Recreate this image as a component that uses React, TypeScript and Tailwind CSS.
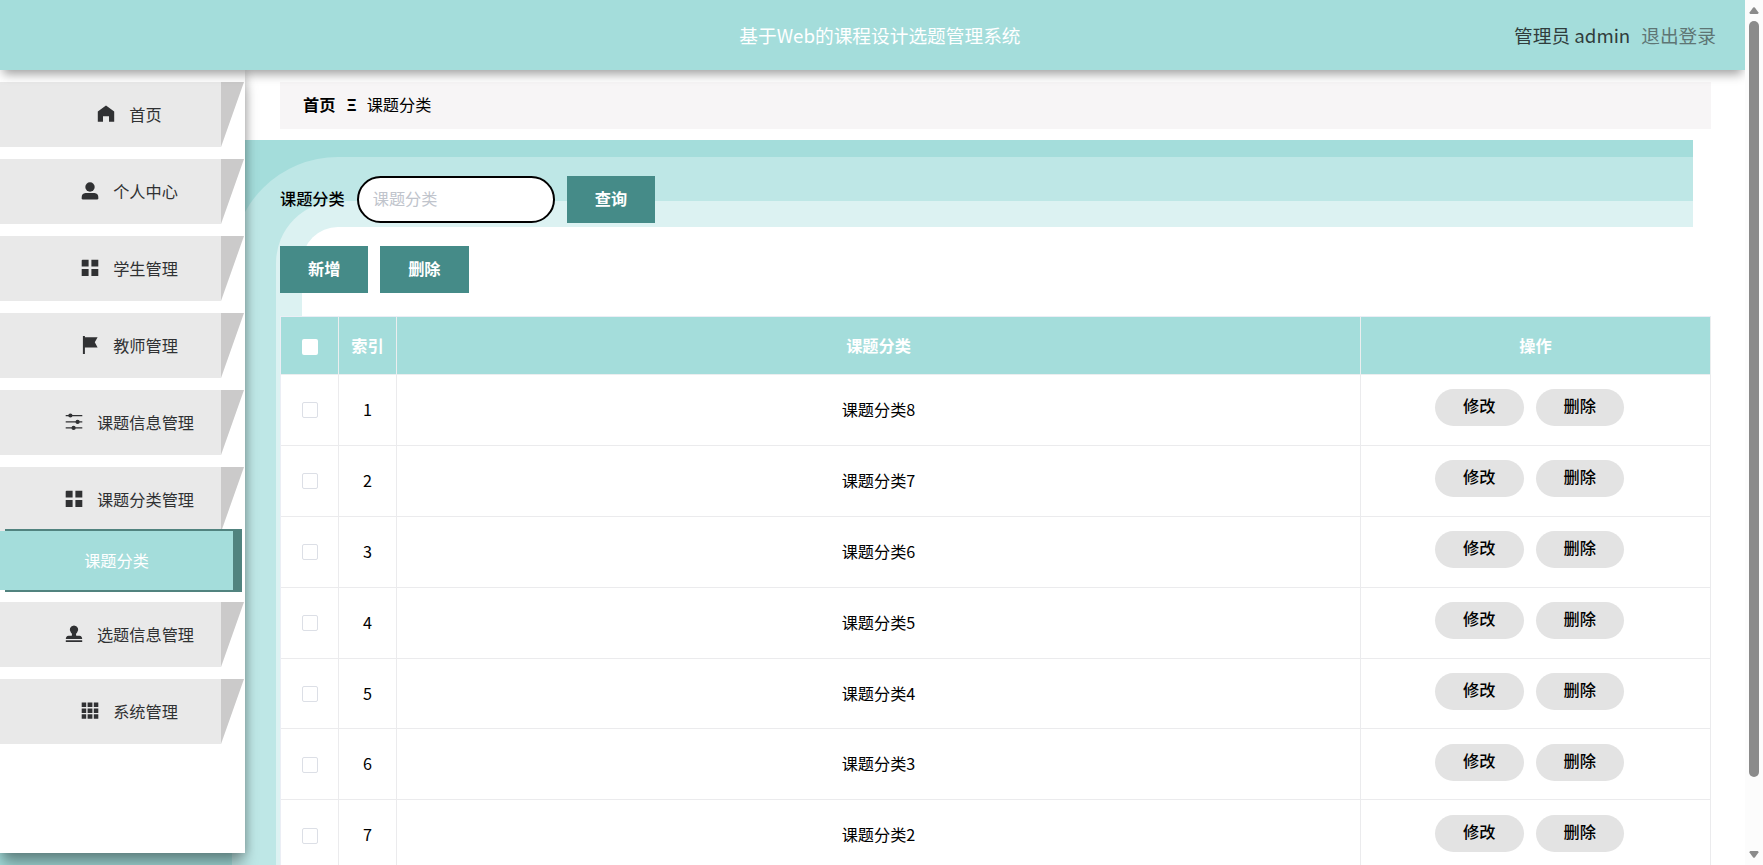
import { ReactNode } from 'react';

const icons: Record<string, ReactNode> = {
  home: <path d="M9 0.6 L0.8 6.6 V16.8 H6 V11.2 H12 V16.8 H17.2 V6.6 Z" />,
  user: (
    <>
      <circle cx="9" cy="5" r="4.7" />
      <path d="M4.5 11 H13.5 Q17.3 11.4 17.3 15 V16.2 Q17.3 17.6 16 17.6 H2 Q0.7 17.6 0.7 16.2 V15 Q0.7 11.4 4.5 11 Z" />
    </>
  ),
  menu: (
    <path d="M1.6 0.7H7.6V7.5H0.7V1.6Q0.7 0.7 1.6 0.7ZM10.4 0.7H17.3V7.5H10.4ZM0.7 10.1H7.6V16.9H0.7ZM10.4 10.1H17.3V16.9H10.4Z" />
  ),
  flag: (
    <path d="M1.9 0H3.9V1.3H16.6L13.8 6.2L16.6 11.4H3.9V18H1.9Z" />
  ),
  operation: (
    <>
      <path d="M0.7 1.9H17.3V3.2H0.7ZM0.7 8.3H17.3V9.6H0.7ZM0.7 14.3H17.3V15.6H0.7Z" />
      <circle cx="5.4" cy="2.5" r="2.1" />
      <circle cx="12.6" cy="8.9" r="2.1" />
      <circle cx="8.6" cy="14.9" r="2.1" />
    </>
  ),
  check: (
    <path d="M9 0.4A4.3 4.3 0 0 0 5.9 7.6Q7.1 8.6 7 9.9Q7 10.8 5.5 10.8H3.5Q0.9 11 0.8 14H17.2Q17.1 11 14.5 10.8H12.5Q11 10.8 11 9.9Q10.9 8.6 12.1 7.6A4.3 4.3 0 0 0 9 0.4ZM0.8 15.2H17.2V16.9H0.8Z" />
  ),
  grid: (
    <path d="M0.7 0.6H5.2V5.1H0.7ZM6.6 0.6H11.4V5.1H6.6ZM12.8 0.6H17.3V5.1H12.8ZM0.7 6.4H5.2V10.9H0.7ZM6.6 6.4H11.4V10.9H6.6ZM12.8 6.4H17.3V10.9H12.8ZM0.7 12.2H5.2V16.8H0.7ZM6.6 12.2H11.4V16.8H6.6ZM12.8 12.2H17.3V16.8H12.8Z" />
  ),
};

const menus = [
  { title: '首页', icon: 'home' },
  { title: '个人中心', icon: 'user' },
  { title: '学生管理', icon: 'menu' },
  { title: '教师管理', icon: 'flag' },
  { title: '课题信息管理', icon: 'operation' },
  { title: '课题分类管理', icon: 'menu', child: '课题分类' },
  { title: '选题信息管理', icon: 'check' },
  { title: '系统管理', icon: 'grid' },
];

const rows = [8, 7, 6, 5, 4, 3, 2].map((n, i) => ({
  index: i + 1,
  name: `课题分类${n}`,
}));

const MenuItem = ({ title, icon }: { title: string; icon: string }) => (
  <div className="flex h-[65px] shrink-0">
    <div className="flex w-[221px] items-center justify-center bg-[#e9e9e9] pb-px pl-[38px] text-[#303133]">
      <svg
        viewBox="0 0 18 18"
        className="mr-[14px] -mt-px h-[18px] w-[18px] fill-[#303133]"
      >
        {icons[icon]}
      </svg>
      <span>{title}</span>
    </div>
    <div className="w-[23px] bg-[#cbcaca] [clip-path:polygon(0_0,100%_0,0_100%)]" />
  </div>
);

const Button = ({ children }: { children: ReactNode }) => (
  <button className="h-[47px] w-[88.4px] bg-[#458b88] pb-[3px] font-bold text-white">
    {children}
  </button>
);

const Pill = ({ children }: { children: ReactNode }) => (
  <button className="mr-3 h-[37px] w-[88.4px] rounded-full bg-[#e3e3e3] pb-[5px] font-medium text-black">
    {children}
  </button>
);

const Header = () => (
  <header className="z-20 grid h-[70px] shrink-0 grid-cols-[739.3px_1fr_auto] items-center bg-[#a4dddb] pr-[29px] pb-px text-[18.7px] shadow-[0_7px_10px_-3px_rgba(0,0,0,0.38)]">
    <span />
    <h1 className="text-white">基于Web的课程设计选题管理系统</h1>
    <div className="flex gap-[11px]">
      <span className="text-[#303c3c]">管理员 admin</span>
      <span className="text-[#5e7574]">退出登录</span>
    </div>
  </header>
);

const Sidebar = () => (
  <aside className="z-10 flex h-[783px] w-[245px] flex-col gap-[12px] bg-white pt-3 shadow-[0_13px_14px_-2px_rgba(0,0,0,0.36),2px_0_8px_rgba(0,0,0,0.16)] [grid-area:1/1]">
    {menus.map(({ title, icon, child }) => (
      <div key={title}>
        <MenuItem title={title} icon={icon} />
        {child && (
          <div className="relative -mt-px flex h-[59px] w-[233px] items-center justify-center bg-[#a4dddb] pb-px text-white shadow-[7px_0_0_2px_#51837f]">
            {child}
          </div>
        )}
      </div>
    ))}
  </aside>
);

// rounded rings behind the list
const Backdrop = () => (
  <div className="mt-[70px] h-[725px] w-[1692.5px] overflow-hidden bg-[#a4dddb] pt-[17px] pl-[232px] [grid-area:1/1]">
    <div className="h-full rounded-tl-[106px] bg-[#bee7e6] pt-[44px] pl-[44px]">
      <div className="h-full rounded-tl-[62px] bg-[#dcf2f2] pt-[26px] pl-[26px]">
        <div className="h-full rounded-tl-[36px] bg-white" />
      </div>
    </div>
  </div>
);

const Table = () => (
  <div className="mt-[23px] grid w-[1431px] grid-cols-[58px_58px_964px_1fr] border-t border-l border-[#ebeef5] text-center">
    {['', '索引', '课题分类', '操作'].map((title) => (
      <div
        key={title}
        className="flex h-[58px] items-center justify-center border-r border-b border-[#ebeeef] bg-[#a4dddb] pb-px font-bold text-white"
      >
        {title || <span className="mt-[3px] h-4 w-4 rounded-[2px] bg-white" />}
      </div>
    ))}
    {rows.map(({ index, name }) => (
      <div
        key={index}
        className="col-span-4 grid h-[70.9px] grid-cols-subgrid bg-white text-black *:flex *:items-center *:justify-center *:border-r *:border-b *:border-[#ebebed] *:pb-[2px]"
      >
        <div>
          <span className="mt-[3px] h-4 w-4 rounded-[2px] border border-[#dcdfe6]" />
        </div>
        <div>{index}</div>
        <div>{name}</div>
        <div>
          <div className="-mt-[2px] flex">
            <Pill>修改</Pill>
            <Pill>删除</Pill>
          </div>
        </div>
      </div>
    ))}
  </div>
);

const Content = () => (
  <main className="z-[1] ml-[280px] w-[1431px] [grid-area:1/1]">
    <nav className="mt-3 flex h-[47px] items-center gap-[10px] bg-[#f7f5f6] pb-[3px] pl-[23px] text-black">
      <span className="font-bold">首页</span>
      <span className="ml-px font-bold">Ξ</span>
      <span>课题分类</span>
    </nav>
    <div className="mt-[47px] flex items-center">
      <label className="mr-3 -mt-[3px] font-medium text-black">课题分类</label>
      <input
        placeholder="课题分类"
        className="mr-3 h-[47px] w-[198px] rounded-full border-2 border-black bg-white px-[14px] pb-[3px] placeholder:text-[#c0c4cc]"
      />
      <Button>查询</Button>
    </div>
    <div className="mt-[23px] flex gap-[11.8px]">
      <Button>新增</Button>
      <Button>删除</Button>
    </div>
    <Table />
  </main>
);

const Scrollbar = () => (
  <div className="flex h-full w-[18px] shrink-0 flex-col items-center bg-[#fcfcfc] pt-[7px] pb-[7px]">
    <svg viewBox="0 0 10 7" className="h-[7px] w-[10px] fill-[#8b8b8b]">
      <path d="M4.2 0.6Q5 0 5.8 0.6L9.5 5.6Q9.6 6.8 8.6 7H1.4Q0.4 6.8 0.5 5.6Z" />
    </svg>
    <div className="mt-[7px] h-[756px] w-[10px] rounded-full bg-[#8b8b8b]" />
    <svg
      viewBox="0 0 10 7"
      className="mt-auto h-[7px] w-[10px] rotate-180 fill-[#8b8b8b]"
    >
      <path d="M4.2 0.6Q5 0 5.8 0.6L9.5 5.6Q9.6 6.8 8.6 7H1.4Q0.4 6.8 0.5 5.6Z" />
    </svg>
  </div>
);

const App = () => {
  return (
    <div className="flex h-[865px] w-[1763px] overflow-hidden bg-white font-['Noto_Sans_CJK_SC',sans-serif] text-[16.2px] leading-6">
      <div className="flex h-full w-[1745px] flex-col overflow-hidden">
        <Header />
        <div className="grid h-[795px] grid-cols-[1745px] grid-rows-[795px]">
          <Backdrop />
          <Content />
          <Sidebar />
        </div>
      </div>
      <Scrollbar />
    </div>
  );
};

export default App;
